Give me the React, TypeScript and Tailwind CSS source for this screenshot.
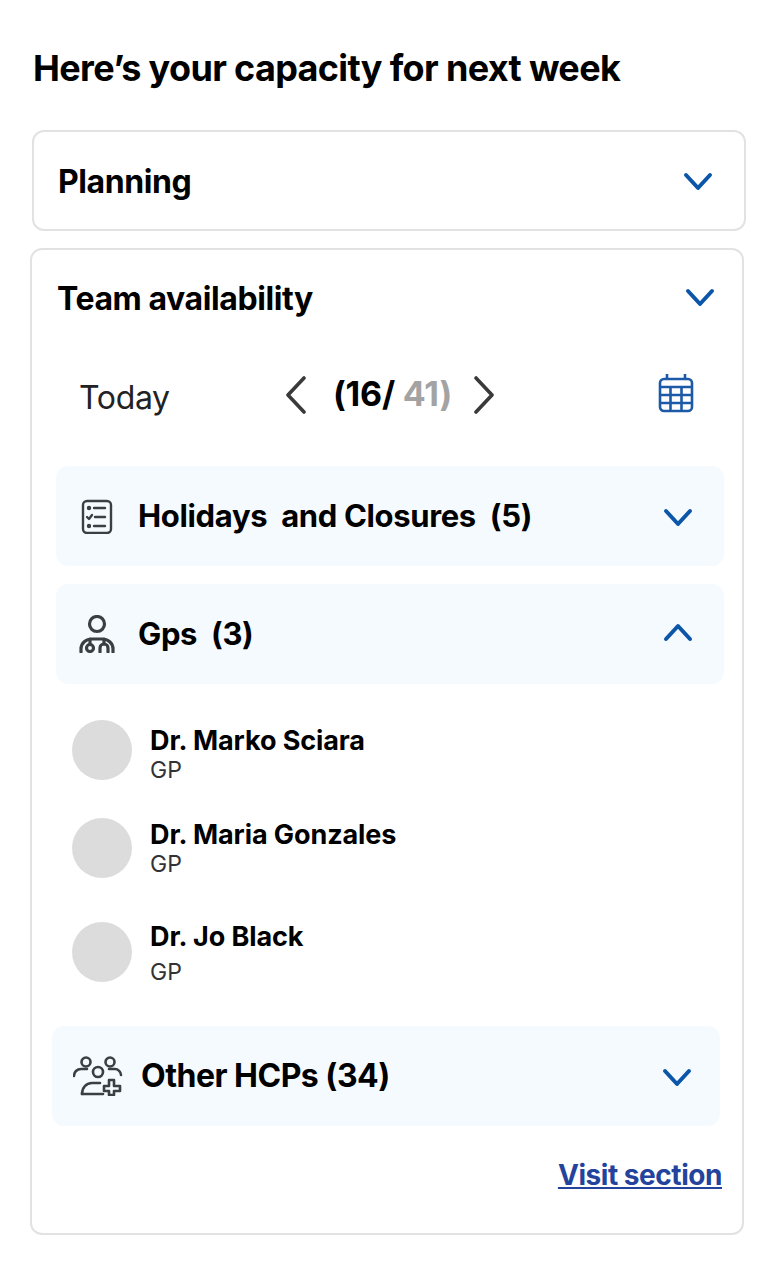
const font = "font-['Inter','Liberation_Sans',sans-serif]"

function Chevron({ up }: { up?: boolean }) {
  return (
    <svg width="30" height="20" viewBox="0 0 30 20" fill="none" stroke="#0b56a8" strokeWidth="4" strokeLinecap="round" strokeLinejoin="round" className="shrink-0">
      <path d={up ? "M3 17L15 4l12 13" : "M3 3l12 13L27 3"} />
    </svg>
  )
}

function PageArrow({ right }: { right?: boolean }) {
  return (
    <svg width="24" height="38" viewBox="0 0 24 38" fill="none" stroke="#3a3a3a" strokeWidth="3.6" strokeLinecap="round" strokeLinejoin="round" className="shrink-0">
      <path d={right ? "M4 2l16 17L4 36" : "M20 2L4 19l16 17"} />
    </svg>
  )
}

function ListIcon() {
  return (
    <svg width="32" height="36" viewBox="0 0 32 36" fill="none" stroke="#3a3f44" strokeWidth="2.4" strokeLinecap="round" strokeLinejoin="round">
      <rect x="2" y="3" width="28" height="32" rx="4" />
      <circle cx="8" cy="10" r="1" fill="#3a3f44" />
      <path d="M13 10h11" />
      <path d="M6 19l2 2 3-4" />
      <path d="M14 19h10" />
      <circle cx="8" cy="28" r="1" fill="#3a3f44" />
      <path d="M13 28h11" />
    </svg>
  )
}

function DoctorIcon() {
  return (
    <svg width="36" height="38" viewBox="0 0 36 38" fill="none" stroke="#3a3f44" strokeWidth="3.2" strokeLinecap="round" strokeLinejoin="round">
      <circle cx="18" cy="9" r="7.5" />
      <path d="M2 37v-3c0-6 5-10 11-10h10c6 0 11 4 11 10v3" />
      <path d="M11 24v5" />
      <circle cx="11" cy="33" r="3.5" />
      <path d="M25 24v5" />
      <path d="M21 37v-4a4 4 0 0 1 8 0v4" />
    </svg>
  )
}

function TeamPlusIcon() {
  return (
    <svg width="50" height="40" viewBox="0 0 50 40" fill="none" stroke="#3a3f44" strokeWidth="2.6" strokeLinecap="round" strokeLinejoin="round">
      <circle cx="13" cy="6" r="4.5" />
      <circle cx="37" cy="6" r="4.5" />
      <circle cx="25" cy="16" r="5" />
      <path d="M1 20c0-4 3-7 7-7h6" />
      <path d="M36 13h6c3 0 6 3 6 6" />
      <path d="M9 38c0-6 4-11 10-11h8" />
      <path d="M9 38h21" />
      <path d="M36 24h5v6h6v5h-6v4h-5v-4h-5v-5h5z" />
    </svg>
  )
}

function CalendarIcon() {
  return (
    <svg width="36" height="40" viewBox="0 0 36 40" fill="none" stroke="#1c5aa8" strokeWidth="2.6" strokeLinejoin="round">
      <path d="M9 1v6M27 1v6" />
      <rect x="2" y="6" width="32" height="32" rx="4" />
      <path d="M2 14h32M2 22h32M2 30h32M12.5 14v24M23.5 14v24" />
    </svg>
  )
}

function Accordion({
  icon,
  label,
  open,
  className,
  iconBox,
  labelClass,
}: {
  icon: React.ReactNode
  label: string
  open?: boolean
  className: string
  iconBox: string
  labelClass: string
}) {
  return (
    <div className={`h-[100px] rounded-xl bg-[#f5faff] flex items-center ${className}`}>
      <div className={`${iconBox} flex justify-center shrink-0`}>{icon}</div>
      <span className={`flex-1 font-[650] text-black whitespace-pre ${labelClass}`}>{label}</span>
      <div className={open ? "-mt-1" : "mt-[4px]"}>
        <Chevron up={open} />
      </div>
    </div>
  )
}

const doctors = [
  { name: "Dr. Marko Sciara", gap: "mt-[36px]", textPad: "pt-[8px]", gpGap: "" },
  { name: "Dr. Maria Gonzales", gap: "mt-[38px]", textPad: "", gpGap: "" },
  { name: "Dr. Jo Black", gap: "mt-[44px]", textPad: "pt-[2px]", gpGap: "mt-[6px]" },
]

export default function App() {
  return (
    <div className={`${font} w-[770px] h-[1280px] bg-white overflow-hidden`}>
      <h1 className="pt-[44px] pl-[33px] text-[36px] leading-[48px] font-[650] tracking-[-0.65px] text-black">
        Here’s your capacity for next week
      </h1>

      <div className="mt-[38px] ml-[32px] w-[714px] h-[101px] border-2 border-[#e2e2e2] rounded-xl flex items-center justify-between pl-[24px] pr-[31px]">
        <span className="mt-[2px] text-[32px] font-[650] tracking-[-0.4px] text-black">Planning</span>
        <div className="mt-[2px]">
          <Chevron />
        </div>
      </div>

      <div className="mt-[17px] ml-[30px] w-[714px] h-[987px] border-2 border-[#e2e2e2] rounded-xl">
        <div className="flex items-center justify-between pl-[25px] pr-[27px] pt-[27px]">
          <span className="text-[32px] leading-[44px] font-[650] tracking-[-0.42px] text-black">Team availability</span>
          <div className="-mt-[2px]">
            <Chevron />
          </div>
        </div>

        <div className="mt-[46px] h-[56px] flex items-center pl-[47px]">
          <span className="w-[205px] shrink-0 text-[32px] text-[#222] tracking-[-0.35px] mt-[6px]">Today</span>
          <PageArrow />
          <span className="ml-[25px] -mt-[3px] w-[119px] shrink-0 text-[34px] font-[650] tracking-[-0.2px] text-black whitespace-pre">
            (16/ <span className="text-[#a3a3a3]">41)</span>
          </span>
          <div className="ml-[20px]">
            <PageArrow right />
          </div>
          <div className="ml-[162px] -mt-[4px]">
            <CalendarIcon />
          </div>
        </div>

        <Accordion
          className="mt-[43px] ml-[24px] w-[668px] pr-[31px]"
          iconBox="w-[82px]"
          labelClass="text-[31px] tracking-[-0.35px]"
          icon={<ListIcon />}
          label="Holidays  and Closures  (5)"
        />
        <Accordion
          className="mt-[18px] ml-[24px] w-[668px] pr-[31px]"
          iconBox="w-[82px]"
          labelClass="text-[31px] tracking-[-0.35px]"
          icon={<DoctorIcon />}
          label="Gps  (3)"
          open
        />

        {doctors.map((d) => (
          <div key={d.name} className={`${d.gap} ml-[40px] h-[60px] flex items-center`}>
            <div className="w-[60px] h-[60px] rounded-full bg-[#dcdcdc]" />
            <div className={`ml-[18px] ${d.textPad}`}>
              <div className="text-[27px] leading-[32px] font-[650] tracking-[-0.1px] text-black">{d.name}</div>
              <div className={`${d.gpGap} text-[23px] leading-[26px] text-[#333]`}>GP</div>
            </div>
          </div>
        ))}

        <Accordion
          className="mt-[44px] ml-[20px] w-[668px] pr-[28px]"
          iconBox="w-[89px] pl-[3px]"
          labelClass="text-[32px] tracking-[-0.5px]"
          icon={<TeamPlusIcon />}
          label="Other HCPs (34)"
        />

        <div className="mt-[31px] pr-[20px] flex justify-end">
          <a className="text-[28px] leading-[36px] font-[650] tracking-[-0.45px] text-[#23439c] underline">Visit section</a>
        </div>
      </div>
    </div>
  )
}
